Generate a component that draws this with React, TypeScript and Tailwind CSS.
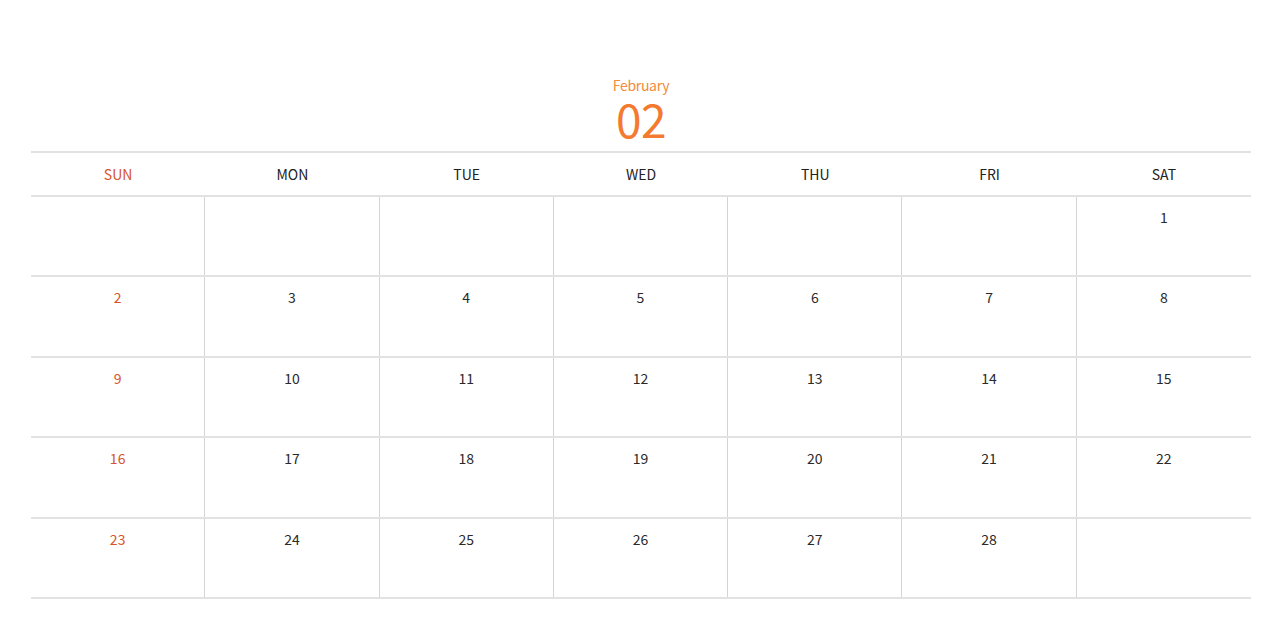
import React from "react";

const days = ["SUN", "MON", "TUE", "WED", "THU", "FRI", "SAT"];
const cells: (number | null)[] = [
  null, null, null, null, null, null, 1,
  ...Array.from({ length: 28 - 1 }, (_, i) => i + 2),
  null,
];

export default function App() {
  const rows: (number | null)[][] = [];
  for (let i = 0; i < 5; i++) rows.push(cells.slice(i * 7, i * 7 + 7));
  return (
    <div
      className="w-[1280px] h-[627px] bg-white overflow-hidden"
      style={{ fontFamily: '"Noto Sans CJK KR", "Noto Sans", sans-serif' }}
    >
      <div className="mx-[31px] w-[1220px] pt-[76px]">
        <div className="flex flex-col items-center h-[75px]">
          <div className="text-[14px] leading-[18px] text-[#f48a3c] tracking-[-0.3px]">February</div>
          <div className="text-[46px] leading-[42px] mt-[3px] text-[#f47a30] tracking-[-0.5px]">02</div>
        </div>
        <div className="grid grid-cols-7 border-t-2 border-b-2 border-[#e2e2e2] h-[46px]">
          {days.map((d, i) => (
            <div
              key={d}
              className={`flex items-center justify-center text-[14px] pt-[1px] ${i === 0 ? "text-[#d6542a]" : "text-[#222]"}`}
            >
              {d}
            </div>
          ))}
        </div>
        {rows.map((r, ri) => (
          <div key={ri} className="grid grid-cols-7 border-b-2 border-[#e2e2e2] h-[80.4px]">
            {r.map((n, ci) => (
              <div
                key={ci}
                className={`flex justify-center pt-[10px] text-[14px] ${ci < 6 ? "border-r border-[#d4d4d4]" : ""} ${ci === 0 ? "text-[#d6542a]" : "text-[#2a2a2a]"}`}
              >
                {n ?? ""}
              </div>
            ))}
          </div>
        ))}
      </div>
    </div>
  );
}
